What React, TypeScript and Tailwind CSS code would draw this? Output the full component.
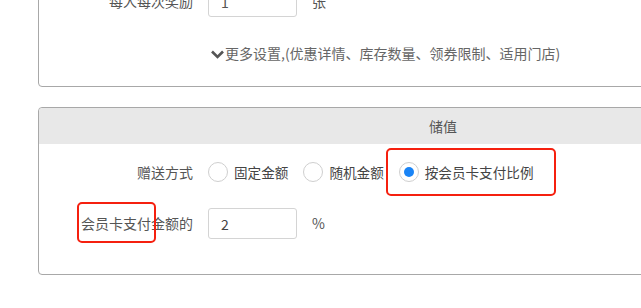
import { useState } from "react";

const font = { fontFamily: '"Noto Sans CJK SC", "Noto Sans", sans-serif' };

function Radio({ checked }: { checked?: boolean }) {
	return (
		<span className="w-[20px] h-[20px] rounded-full border border-[#cfcfcf] bg-white flex items-center justify-center shrink-0">
			{checked && <span className="w-[10px] h-[10px] rounded-full bg-[#1a84f6]" />}
		</span>
	);
}

export default function App() {
	const [mode, setMode] = useState("ratio");
	const options = [
		{ id: "fixed", label: "固定金额" },
		{ id: "random", label: "随机金额" },
		{ id: "ratio", label: "按会员卡支付比例" },
	];

	return (
		<div className="w-[641px] h-[308px] bg-white overflow-hidden text-[14px] text-[#555]" style={font}>
			{/* Coupon card (top part cut off) */}
			<div className="ml-[38px] mt-[-40px] w-[810px] h-[127px] border border-[#a8a8a8] rounded-[4px] pt-[25px]">
				<div className="flex items-center h-[31px]">
					<span className="w-[154px] text-right">每人每次奖励</span>
					<input
						defaultValue="1"
						className="ml-[15px] w-[89px] h-[31px] border border-[#d4d4d4] rounded-[3px] px-[12px] text-[#555] outline-none"
					/>
					<span className="ml-[15px]">张</span>
				</div>
				<div className="flex items-center mt-[26px] ml-[172px] text-[#666]">
					<svg width="13" height="10" viewBox="0 0 13 10" className="mr-[1px]">
						<path d="M1 2.5 L6.5 8 L12 2.5" fill="none" stroke="#555" strokeWidth="2.6" strokeLinejoin="miter" />
					</svg>
					<span>更多设置,(优惠详情、库存数量、领券限制、适用门店)</span>
				</div>
			</div>

			{/* Stored value card */}
			<div className="relative ml-[38px] mt-[20px] w-[810px] h-[168px] border border-[#a8a8a8] rounded-[4px]">
				<div className="h-[36px] bg-[#e8e8e8] rounded-t-[4px] flex items-center justify-center">
					储值
				</div>
				<div className="flex items-center h-[31px] mt-[13px]">
					<span className="w-[154px] text-right">赠送方式</span>
					<div className="ml-[15px] flex items-center gap-[15px]">
						{options.map((o) => (
							<label
								key={o.id}
								onClick={() => setMode(o.id)}
								className="flex items-center gap-[6px] cursor-pointer text-[#444] text-[13.6px]"
							>
								<Radio checked={mode === o.id} />
								<span>{o.label}</span>
							</label>
						))}
					</div>
				</div>
				<div className="flex items-center h-[31px] mt-[20px]">
					<span className="w-[154px] text-right">会员卡支付金额的</span>
					<input
						defaultValue="2"
						className="ml-[15px] w-[89px] h-[31px] border border-[#d4d4d4] rounded-[3px] px-[12px] text-[#444] outline-none"
					/>
					<span className="ml-[15px]">%</span>
				</div>

				{/* annotation boxes */}
				<div className="absolute left-[347px] top-[40px] w-[170px] h-[48px] border-[2.5px] border-[#f5200f] rounded-[5px]" />
				<div className="absolute left-[38px] top-[94px] w-[79px] h-[41px] border-[2.5px] border-[#f5200f] rounded-[5px]" />
			</div>
		</div>
	);
}
